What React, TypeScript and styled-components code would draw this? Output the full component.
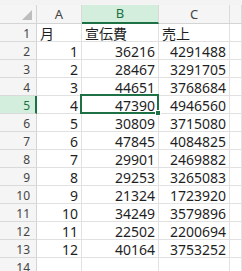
import styled, { createGlobalStyle, css } from 'styled-components';

const GlobalStyle = createGlobalStyle`
  html, body {
    margin: 0;
    padding: 0;
    background: #ffffff;
  }
  body {
    width: 242px;
    height: 271px;
    overflow: hidden;
    font-family: "Noto Sans", "Noto Sans CJK JP", sans-serif;
  }
`;

const GREEN = '#1e7145';
const GREEN_BG = '#d3eedc';

const Sheet = styled.div`
  width: 242px;
  height: 271px;
  overflow: hidden;
  background: #fff;
  display: flex;
  flex-direction: column;
`;

const TopStrip = styled.div`
  height: 5px;
  flex: none;
  background: #f3f3f3;
`;

const Grid = styled.div`
  display: grid;
  grid-template-columns: 37px 45px 77px 71px 1fr;
  grid-template-rows: 19px repeat(14, 18px);
`;

const Corner = styled.div`
  background: #f5f5f5;
  border-right: 1px solid #d4d4d4;
  border-bottom: 1px solid #d4d4d4;
  box-sizing: border-box;
  display: flex;
  align-items: flex-end;
  justify-content: flex-end;
  padding: 0 4px 3px 0;
`;

const ColHead = styled.div<{ $active?: boolean }>`
  box-sizing: border-box;
  background: #f5f5f5;
  border-right: 1px solid #dadada;
  border-bottom: 1px solid #d4d4d4;
  display: flex;
  align-items: center;
  justify-content: center;
  font-size: 13px;
  line-height: 13px;
  color: #444;
  ${(p) =>
    p.$active &&
    css`
      background: ${GREEN_BG};
      border-bottom: 2px solid ${GREEN};
      color: ${GREEN};
    `}
`;

const RowHead = styled.div<{ $active?: boolean }>`
  box-sizing: border-box;
  background: #f5f5f5;
  border-right: 1px solid #d4d4d4;
  border-bottom: 1px solid #dadada;
  display: flex;
  align-items: flex-end;
  justify-content: flex-end;
  padding: 0 6px 1px 0;
  font-size: 12px;
  line-height: 12px;
  color: #444;
  ${(p) =>
    p.$active &&
    css`
      background: ${GREEN_BG};
      border-right: 2px solid ${GREEN};
      padding-right: 5px;
      color: ${GREEN};
    `}
`;

const Cell = styled.div<{ $num?: boolean; $selected?: boolean }>`
  position: relative;
  box-sizing: border-box;
  border-right: 1px solid #e1e1e1;
  border-bottom: 1px solid #e1e1e1;
  display: flex;
  align-items: flex-end;
  justify-content: ${(p) => (p.$num ? 'flex-end' : 'flex-start')};
  padding: 0 ${(p) => (p.$num ? '3px' : '0')} 0 ${(p) => (p.$num ? '0' : '3px')};
  font-size: 14px;
  line-height: 14px;
  color: #1f1f1f;
  white-space: nowrap;
  ${(p) =>
    p.$selected &&
    css`
      &::after {
        content: '';
        position: absolute;
        top: -2px;
        left: -2px;
        right: -1px;
        bottom: -1px;
        border: 2px solid ${GREEN};
        pointer-events: none;
      }
      &::before {
        content: '';
        position: absolute;
        right: -3px;
        bottom: -3px;
        width: 4px;
        height: 4px;
        background: ${GREEN};
        border: 1px solid #fff;
        z-index: 1;
      }
    `}
`;

const data: [number, number, number][] = [
  [1, 36216, 4291488],
  [2, 28467, 3291705],
  [3, 44651, 3768684],
  [4, 47390, 4946560],
  [5, 30809, 3715080],
  [6, 47845, 4084825],
  [7, 29901, 2469882],
  [8, 29253, 3265083],
  [9, 21324, 1723920],
  [10, 34249, 3579896],
  [11, 22502, 2200694],
  [12, 40164, 3753252],
];

export default function App() {
  return (
    <Sheet>
      <GlobalStyle />
      <TopStrip />
      <Grid>
        <Corner>
          <svg width="10" height="10" viewBox="0 0 10 10">
            <polygon points="10,0 10,10 0,10" fill="#bdbdbd" />
          </svg>
        </Corner>
        <ColHead>A</ColHead>
        <ColHead $active>B</ColHead>
        <ColHead>C</ColHead>
        <ColHead />

        <RowHead>1</RowHead>
        <Cell>月</Cell>
        <Cell>宣伝費</Cell>
        <Cell>売上</Cell>
        <Cell />

        {data.map(([m, ad, sales], i) => {
          const row = i + 2;
          return [
            <RowHead key={`h${row}`} $active={row === 5}>
              {row}
            </RowHead>,
            <Cell key={`a${row}`} $num>
              {m}
            </Cell>,
            <Cell key={`b${row}`} $num $selected={row === 5}>
              {ad}
            </Cell>,
            <Cell key={`c${row}`} $num>
              {sales}
            </Cell>,
            <Cell key={`d${row}`} />,
          ];
        })}

        <RowHead>14</RowHead>
        <Cell />
        <Cell />
        <Cell />
        <Cell />
      </Grid>
    </Sheet>
  );
}
